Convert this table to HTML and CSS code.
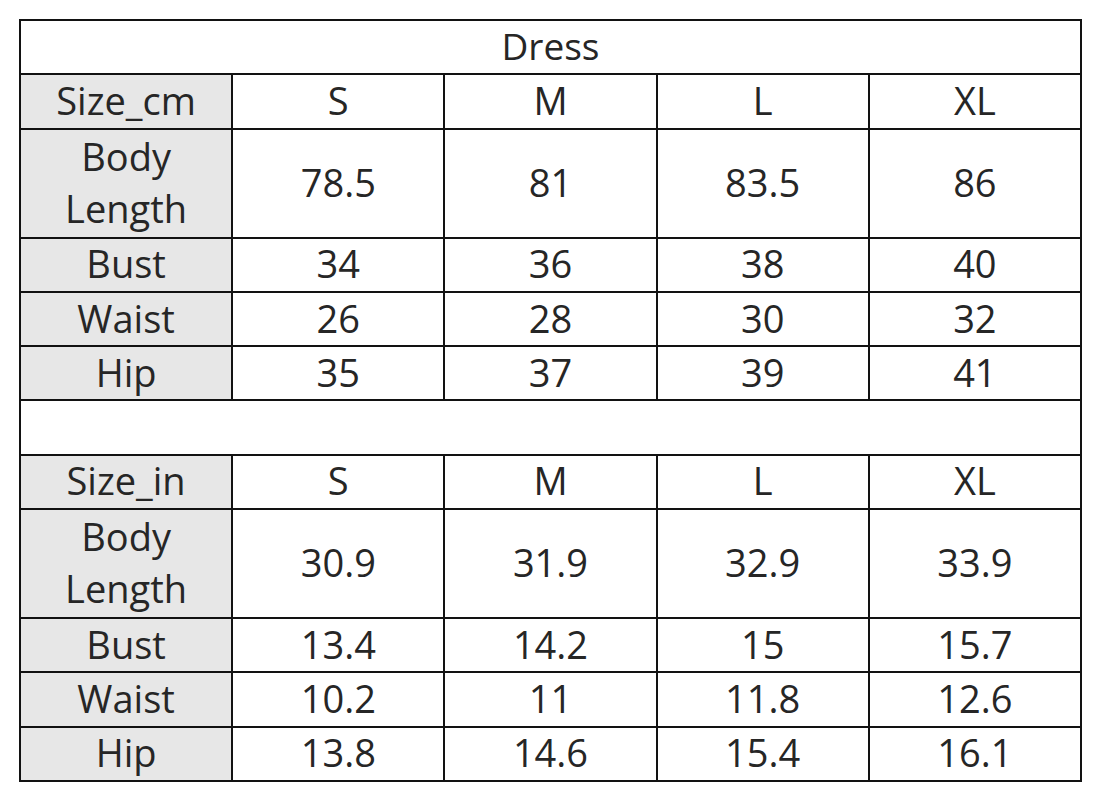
FILE: index.html
```
<!DOCTYPE html>
<html>
<head>
<meta charset="utf-8">
<link rel="stylesheet" href="styles.css">
</head>
<body>
<table class="chart">
  <colgroup><col class="c"><col class="c"><col class="c"><col class="c"><col class="c"></colgroup>
  <tr class="row"><td colspan="5" class="title">Dress</td></tr>
  <tr class="row"><td class="label">Size_cm</td><td>S</td><td>M</td><td>L</td><td>XL</td></tr>
  <tr class="row tall"><td class="label">Body<br>Length</td><td>78.5</td><td>81</td><td>83.5</td><td>86</td></tr>
  <tr class="row"><td class="label">Bust</td><td>34</td><td>36</td><td>38</td><td>40</td></tr>
  <tr class="row"><td class="label">Waist</td><td>26</td><td>28</td><td>30</td><td>32</td></tr>
  <tr class="row"><td class="label">Hip</td><td>35</td><td>37</td><td>39</td><td>41</td></tr>
  <tr class="row"><td colspan="5" class="blank"></td></tr>
  <tr class="row"><td class="label">Size_in</td><td>S</td><td>M</td><td>L</td><td>XL</td></tr>
  <tr class="row tall"><td class="label">Body<br>Length</td><td>30.9</td><td>31.9</td><td>32.9</td><td>33.9</td></tr>
  <tr class="row"><td class="label">Bust</td><td>13.4</td><td>14.2</td><td>15</td><td>15.7</td></tr>
  <tr class="row"><td class="label">Waist</td><td>10.2</td><td>11</td><td>11.8</td><td>12.6</td></tr>
  <tr class="row"><td class="label">Hip</td><td>13.8</td><td>14.6</td><td>15.4</td><td>16.1</td></tr>
</table>
</body>
</html>
```
FILE: styles.css
```
html, body {
  margin: 0;
  padding: 0;
  background: #ffffff;
}
body {
  padding: 19px 0 0 19px;
}
.chart {
  border-collapse: collapse;
  table-layout: fixed;
  width: 1063px;
  font-family: "Open Sans", "Noto Sans", sans-serif;
  font-size: 38px;
  color: #262626;
}
.chart td {
  border: 2px solid #121212;
  text-align: center;
  vertical-align: middle;
  padding: 0 0 3px 0;
  height: 49.3px;
  line-height: 48px;
  overflow: hidden;
}
.chart .tall td {
  height: 104px;
  padding-bottom: 3px;
  line-height: 52px;
}
.chart .label {
  background: #e7e7e7;
}
.title {
  font-size: 37px;
}
```
